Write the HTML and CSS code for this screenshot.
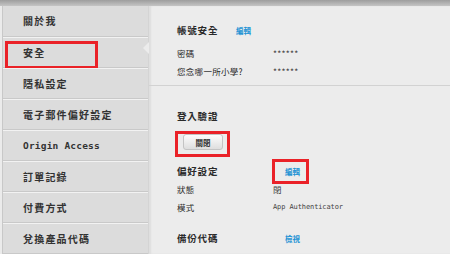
FILE: index.html
```html
<!DOCTYPE html>
<html lang="zh-Hant">
<head>
<meta charset="UTF-8">
<title>帳號安全</title>
<link rel="stylesheet" href="styles.css">
</head>
<body>
<div class="topbar"></div>
<div class="page">
  <ul class="menu">
    <li class="menu-item">關於我</li>
    <li class="menu-item active marked">安全</li>
    <li class="menu-item">隱私設定</li>
    <li class="menu-item">電子郵件偏好設定</li>
    <li class="menu-item latin">Origin Access</li>
    <li class="menu-item">訂單記錄</li>
    <li class="menu-item">付費方式</li>
    <li class="menu-item">兌換產品代碼</li>
  </ul>
  <div class="content">
    <div class="section first">
      <div class="row heading">
        <span class="label">帳號安全</span>
        <a class="link near">編輯</a>
      </div>
      <div class="row">
        <span class="label">密碼</span>
        <span class="value">******</span>
      </div>
      <div class="row">
        <span class="label">您念哪一所小學?</span>
        <span class="value">******</span>
      </div>
    </div>
    <div class="section">
      <div class="row heading">
        <span class="label">登入驗證</span>
      </div>
      <div class="btn-row">
        <button class="btn marked">關閉</button>
      </div>
      <div class="row heading">
        <span class="label">偏好設定</span>
        <a class="link marked">編輯</a>
      </div>
      <div class="row">
        <span class="label">狀態</span>
        <span class="value">閉</span>
      </div>
      <div class="row">
        <span class="label">模式</span>
        <span class="value mono">App Authenticator</span>
      </div>
      <div class="row heading backup">
        <span class="label">備份代碼</span>
        <a class="link">檢視</a>
      </div>
    </div>
  </div>
</div>
</body>
</html>
```

FILE: styles.css
```css
body{
  margin: 0;
  background: #ebebeb;
  font-family: "Noto Sans CJK TC", "DejaVu Sans", sans-serif;
  color: #2a2a2a;
  overflow: hidden;
}
*, *:before, *:after{
  box-sizing: border-box;
}
.topbar{
  height: 6px;
  background: linear-gradient(#9d9d9d, #c4c4c4);
}
.page{
  display: flex;
  height: 248px;
}

/* left menu */
.menu{
  list-style: none;
  margin: 0 0 0 2px;
  padding: 0;
  width: 146px;
  background: #dcdcdc;
  border-left: 1px solid #c8c8c8;
}
.menu-item{
  position: relative;
  height: 31px;
  line-height: 30px;
  padding-left: 20px;
  font-size: 10px;
  font-weight: bold;
  letter-spacing: 1.2px;
  color: #333;
  border-top: 1px solid #f2f2f2;
  border-bottom: 1px solid #c9c9c9;
}
.menu-item:first-child{
  border-top: 0;
}
.menu-item.latin{
  font-family: "DejaVu Sans Mono", monospace;
  font-size: 9.5px;
  letter-spacing: 0.2px;
}
.menu-item.marked:after{
  content: '';
  position: absolute;
  left: 2px;
  top: 3px;
  width: 93px;
  height: 28px;
  border: 3px solid #ea2228;
}

/* main panel */
.content{
  position: relative;
  flex: 1;
  background: #ececec;
  border-left: 1px solid #d4d4d4;
  box-shadow: inset 2px 0 2px rgba(0, 0, 0, 0.06);
  padding-top: 15px;
}
.content:before{
  content: '';
  position: absolute;
  left: -6px;
  top: 36px;
  width: 0;
  height: 0;
  border-top: 6px solid transparent;
  border-bottom: 6px solid transparent;
  border-right: 6px solid #ececec;
}
.section{
  padding-left: 28px;
}
.section.first{
  padding-bottom: 5px;
  border-bottom: 1px solid #d2d2d2;
  margin-bottom: 21px;
}
.row{
  display: flex;
  align-items: center;
  height: 18px;
  font-size: 8.5px;
  letter-spacing: 0.3px;
}
.section.first .heading{
  margin-bottom: 5px;
}
.row .label{
  width: 96px;
  flex-shrink: 0;
}
.heading{
  font-size: 9.5px;
  font-weight: bold;
  letter-spacing: 0.8px;
}
.heading .label{
  width: 108px;
}
.section.first .heading .label{
  width: 59px;
}
.value{
  color: #444;
}
.mono{
  font-family: "DejaVu Sans Mono", monospace;
  font-size: 7px;
  letter-spacing: -0.1px;
}
.link{
  position: relative;
  color: #2192d4;
  font-size: 7.5px;
  font-weight: bold;
  letter-spacing: 0;
}
.link.marked:after{
  content: '';
  position: absolute;
  left: -13px;
  right: -9px;
  top: -7px;
  bottom: -7px;
  border: 3px solid #ea2228;
}
.btn-row{
  height: 16px;
  margin: 9px 0 12px 6px;
}
.btn{
  position: relative;
  display: block;
  width: 40px;
  height: 16px;
  padding: 0;
  border: 1px solid #c4c4c4;
  border-radius: 3px;
  background: linear-gradient(#fdfdfd, #dedede);
  font-family: "Noto Sans CJK TC", sans-serif;
  font-size: 7.5px;
  font-weight: bold;
  color: #333;
}
.btn.marked:after{
  content: '';
  position: absolute;
  left: -9px;
  right: -8px;
  top: -4px;
  bottom: -8px;
  border: 3px solid #ea2228;
}
.backup{
  margin-top: 13px;
}
```
